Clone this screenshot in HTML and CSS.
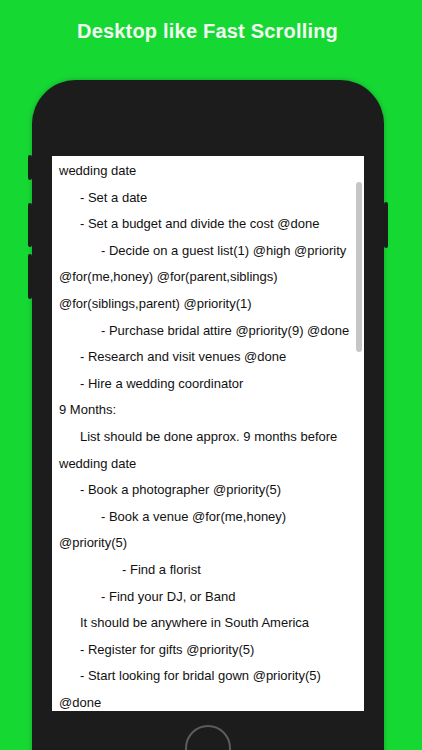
FILE: index.html
```html
<!DOCTYPE html>
<html>
<head>
<meta charset="utf-8">
<link rel="stylesheet" href="styles.css">
</head>
<body>
<h1 class="title">Desktop like Fast Scrolling</h1>
<div class="phone">
  <span class="btn btn-l1"></span>
  <span class="btn btn-l2"></span>
  <span class="btn btn-l3"></span>
  <span class="btn btn-r1"></span>
  <div class="screen">
    <div class="scrollbar"></div>
    <div class="line">wedding date</div>
    <div class="line l1">- Set a date</div>
    <div class="line l1">- Set a budget and divide the cost @done</div>
    <div class="line l2">- Decide on a guest list(1) @high @priority</div>
    <div class="line">@for(me,honey) @for(parent,siblings)</div>
    <div class="line">@for(siblings,parent) @priority(1)</div>
    <div class="line l2">- Purchase bridal attire @priority(9) @done</div>
    <div class="line l1">- Research and visit venues @done</div>
    <div class="line l1">- Hire a wedding coordinator</div>
    <div class="line">9 Months:</div>
    <div class="line l1">List should be done approx. 9 months before</div>
    <div class="line">wedding date</div>
    <div class="line l1">- Book a photographer @priority(5)</div>
    <div class="line l2">- Book a venue @for(me,honey)</div>
    <div class="line">@priority(5)</div>
    <div class="line l3">- Find a florist</div>
    <div class="line l2">- Find your DJ, or Band</div>
    <div class="line l1">It should be anywhere in South America</div>
    <div class="line l1">- Register for gifts @priority(5)</div>
    <div class="line l1">- Start looking for bridal gown @priority(5)</div>
    <div class="line">@done</div>
  </div>
  <div class="home"></div>
</div>
</body>
</html>
```
FILE: styles.css
```css
html, body {
  margin: 0;
  padding: 0;
  height: 750px;
  overflow: hidden;
  background: #16d833;
}
.title {
  margin: 0;
  padding: 19px 7px 0 0;
  height: 61px;
  box-sizing: border-box;
  text-align: center;
  color: #f2fbf2;
  font-family: "Liberation Sans", Arial, sans-serif;
  font-weight: bold;
  font-size: 20px;
  line-height: 24px;
  letter-spacing: 0.2px;
}
.phone {
  position: relative;
  margin: 19px 0 0 32px;
  width: 352px;
  height: 700px;
  box-sizing: border-box;
  padding: 76px 20px 0 20px;
  background: #1c1c1c;
  border-radius: 44px 44px 0 0;
  box-shadow: 0 0 5px rgba(0, 0, 0, 0.25);
}
.btn {
  position: absolute;
  width: 4px;
  background: #1c1c1c;
  border-radius: 2px;
}
.btn-l1 { left: -4px; top: 75px; height: 25px; }
.btn-l2 { left: -4px; top: 123px; height: 44px; }
.btn-l3 { left: -4px; top: 174px; height: 45px; }
.btn-r1 { right: -4px; top: 122px; height: 46px; }
.screen {
  position: relative;
  height: 555px;
  box-sizing: border-box;
  padding: 2px 0 0 7px;
  background: #ffffff;
  overflow: hidden;
  font-family: "Liberation Sans", Arial, sans-serif;
  font-size: 13px;
  color: #111111;
}
.scrollbar {
  position: absolute;
  right: 2px;
  top: 26px;
  width: 6px;
  height: 170px;
  border-radius: 3px;
  background: #c6c6c6;
}
.line {
  height: 26.6px;
  line-height: 26.6px;
  white-space: nowrap;
}
.l1 { padding-left: 21px; }
.l2 { padding-left: 42px; }
.l3 { padding-left: 63px; }
.home {
  margin: 14px auto 0;
  width: 42px;
  height: 42px;
  border: 2px solid #5c5c5c;
  border-radius: 50%;
}
```
